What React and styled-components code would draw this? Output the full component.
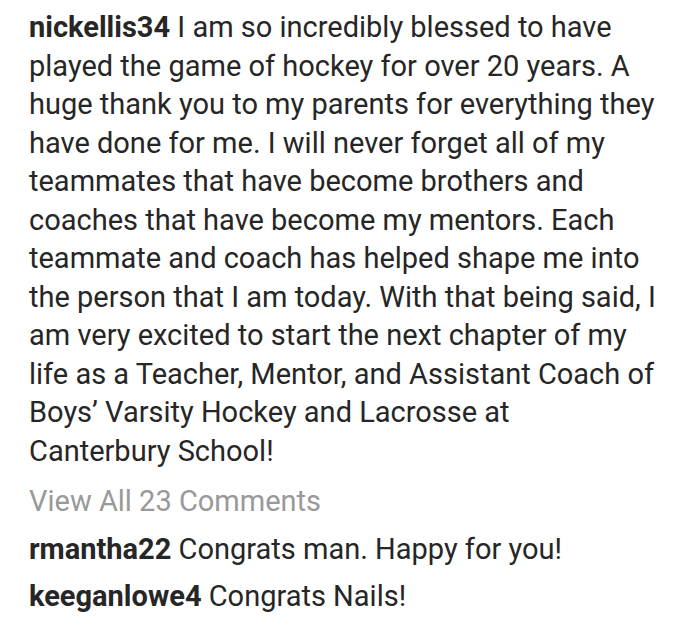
import React from 'react';
import styled, { createGlobalStyle } from 'styled-components';

const GlobalStyle = createGlobalStyle`
  body {
    margin: 0;
    padding: 0;
    background: #fff;
    color: #262626;
    font-family: 'Roboto', 'Noto Sans', sans-serif;
  }
`;

const Post = styled.div`
  width: 629px;
  padding: 8px 0 0 29px;
  font-size: 29px;
  line-height: 38.5px;
`;

const Caption = styled.p`
  margin: 0;
`;

const User = styled.span`
  font-weight: 700;
`;

const ViewAll = styled.div`
  margin-top: 12px;
  color: #999;
`;

const Comment = styled.div`
  margin-top: ${(p) => p.gap || 9}px;
`;

const comments = [
  { user: 'rmantha22', text: 'Congrats man. Happy for you!' },
  { user: 'keeganlowe4', text: 'Congrats Nails!' },
];

const App = () => {
  return (
    <>
      <GlobalStyle />
      <Post>
        <Caption>
          <User>nickellis34</User> I am so incredibly blessed to have played the game of hockey for over 20 years. A
          huge thank you to my parents for everything they have done for me. I will never forget all of my teammates
          that have become brothers and coaches that have become my mentors. Each teammate and coach has helped shape
          me into the person that I am today. With that being said, I am very excited to start the next chapter of my
          life as a Teacher, Mentor, and Assistant Coach of Boys’ Varsity Hockey and Lacrosse at Canterbury School!
        </Caption>
        <ViewAll>View All 23 Comments</ViewAll>
        {comments.map((c, i) => (
          <Comment key={c.user} gap={i === 0 ? 9 : 8.5}>
            <User>{c.user}</User> {c.text}
          </Comment>
        ))}
      </Post>
    </>
  );
};

export default App;
